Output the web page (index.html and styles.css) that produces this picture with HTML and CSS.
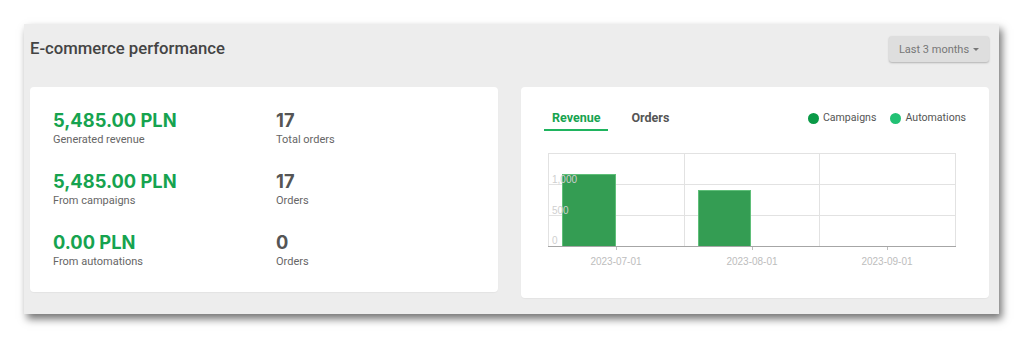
FILE: index.html
```html
<!DOCTYPE html>
<html lang="en">
<head>
<meta charset="utf-8">
<title>E-commerce performance</title>
<link rel="stylesheet" href="styles.css">
</head>
<body>
<div class="panel">
  <div class="header">
    <h2 class="title">E-commerce performance</h2>
    <button class="range">Last 3 months <span class="caret"></span></button>
  </div>
  <div class="cards">
    <div class="card stats">
      <div class="stat"><div class="value green">5,485.00 PLN</div><div class="label">Generated revenue</div></div>
      <div class="stat"><div class="value">17</div><div class="label">Total orders</div></div>
      <div class="stat"><div class="value green">5,485.00 PLN</div><div class="label">From campaigns</div></div>
      <div class="stat"><div class="value">17</div><div class="label">Orders</div></div>
      <div class="stat"><div class="value green">0.00 PLN</div><div class="label">From automations</div></div>
      <div class="stat"><div class="value">0</div><div class="label">Orders</div></div>
    </div>
    <div class="card chart-card">
      <div class="chart-head">
        <div class="tabs">
          <span class="tab active">Revenue</span>
          <span class="tab">Orders</span>
        </div>
        <div class="legend">
          <span class="legend-item"><span class="dot dot-campaigns"></span>Campaigns</span>
          <span class="legend-item"><span class="dot dot-automations"></span>Automations</span>
        </div>
      </div>
      <svg class="chart" width="420" height="120" viewBox="0 0 420 120">
        <rect x="8.5" y="3.5" width="407" height="93" fill="none" stroke="#e2e2e2"/>
        <line x1="144.5" y1="3" x2="144.5" y2="96" stroke="#e2e2e2"/>
        <line x1="279.5" y1="3" x2="279.5" y2="96" stroke="#e2e2e2"/>
        <line x1="8" y1="34.5" x2="416" y2="34.5" stroke="#e2e2e2"/>
        <line x1="8" y1="65.5" x2="416" y2="65.5" stroke="#e2e2e2"/>
        <rect x="22.5" y="24.5" width="53" height="72" fill="#349d53" stroke="#5fbf79"/>
        <rect x="158.5" y="40.5" width="52" height="56" fill="#349d53" stroke="#5fbf79"/>
        <line x1="8" y1="96.5" x2="416" y2="96.5" stroke="#a6a6a6"/>
        <line x1="76.5" y1="97" x2="76.5" y2="100" stroke="#bdbdbd"/>
        <line x1="212.5" y1="97" x2="212.5" y2="100" stroke="#bdbdbd"/>
        <line x1="347.5" y1="97" x2="347.5" y2="100" stroke="#bdbdbd"/>
        <g class="ylabels">
          <text x="12" y="33">1,000</text>
          <text x="12" y="64">500</text>
          <text x="12" y="94">0</text>
        </g>
        <g class="xlabels">
          <text x="76" y="115">2023-07-01</text>
          <text x="212" y="115">2023-08-01</text>
          <text x="347" y="115">2023-09-01</text>
        </g>
      </svg>
    </div>
  </div>
</div>
</body>
</html>
```

FILE: styles.css
```css
html, body {
  margin: 0;
  padding: 0;
  background: #ffffff;
}
body {
  min-height: 339px;
  box-sizing: border-box;
  padding: 24px 25px 0 24px;
  font-family: Roboto, "Noto Sans", sans-serif;
  color: #555;
}
.panel {
  width: 975px;
  box-sizing: border-box;
  background: #ededed;
  padding: 12px 10px 16px 6px;
  box-shadow: 3px 5px 8px rgba(0, 0, 0, 0.55);
}
.header {
  display: flex;
  align-items: center;
  justify-content: space-between;
  height: 26px;
}
.title {
  margin: 0;
  font-size: 16.7px;
  line-height: 26px;
  font-weight: 500;
  color: #444;
}
.range {
  width: 100px;
  height: 26px;
  border: none;
  border-radius: 3px;
  background: #dedede;
  box-shadow: 0 1px 2px rgba(0, 0, 0, 0.25);
  font-family: Roboto, sans-serif;
  font-size: 11px;
  color: #777;
  display: flex;
  align-items: center;
  justify-content: center;
  gap: 4px;
  padding: 0;
}
.caret {
  width: 0;
  height: 0;
  border-left: 3px solid transparent;
  border-right: 3px solid transparent;
  border-top: 3px solid #777;
}
.cards {
  margin-top: 25px;
  display: grid;
  grid-template-columns: 1fr 1fr;
  column-gap: 23px;
  align-items: start;
}
.card {
  background: #fff;
  border-radius: 4px;
  box-shadow: 0 1px 1px rgba(0, 0, 0, 0.04);
}
.stats {
  padding: 22px 23px 23px;
  display: grid;
  grid-template-columns: 223px 1fr;
  row-gap: 23px;
}
.value {
  font-family: Inter, Roboto, sans-serif;
  font-size: 18.3px;
  line-height: 23px;
  font-weight: 700;
  color: #555;
}
.value.green {
  color: #16a34f;
}
.label {
  font-size: 11px;
  line-height: 15px;
  color: #666;
}
.chart-card {
  padding: 20px 23px 28px;
}
.chart-head {
  display: flex;
  justify-content: space-between;
  align-items: flex-start;
}
.tabs {
  display: flex;
  gap: 15px;
}
.tab {
  padding: 3px 8px 3px;
  line-height: 16px;
  font-size: 12.5px;
  font-weight: 700;
  color: #555;
  border-bottom: 2px solid transparent;
}
.tab.active {
  color: #16a34f;
  border-bottom-color: #1fb45f;
}
.legend {
  display: flex;
  gap: 14px;
  padding-top: 4px;
  font-size: 10.6px;
  line-height: 14px;
  color: #555;
}
.legend-item {
  display: flex;
  align-items: center;
  gap: 4px;
}
.dot {
  width: 11px;
  height: 11px;
  border-radius: 50%;
}
.dot-campaigns {
  background: #0a9a47;
}
.dot-automations {
  background: #22c174;
}
.chart {
  display: block;
  margin: 19px 0 0 -4px;
}
.chart text {
  font-family: "Liberation Sans", Arial, sans-serif;
  font-size: 10px;
}
.ylabels text {
  fill: #cfcfcf;
}
.xlabels text {
  fill: #bdbdbd;
  text-anchor: middle;
}
```
